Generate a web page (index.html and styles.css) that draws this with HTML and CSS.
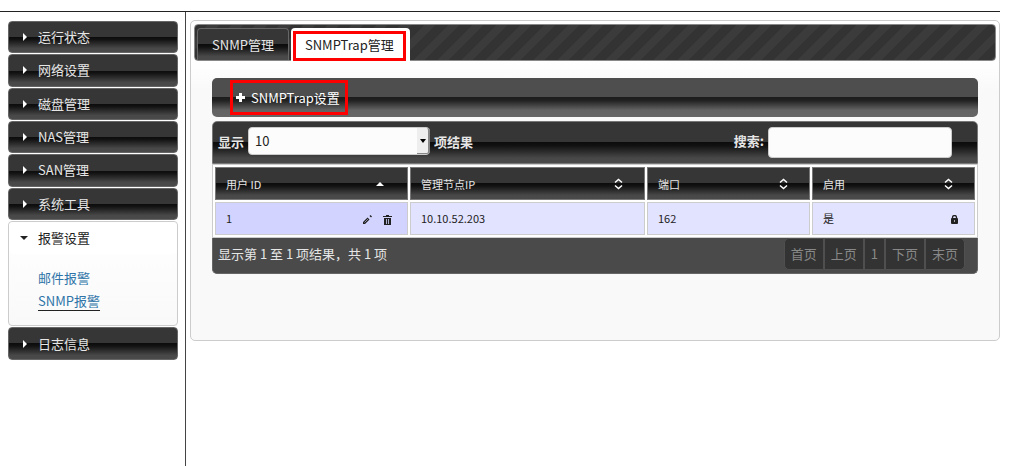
FILE: index.html
```html
<!DOCTYPE html>
<html lang="zh-CN">
<head>
<meta charset="utf-8">
<title>SNMPTrap管理</title>
<link rel="stylesheet" href="styles.css">
</head>
<body>
<div class="page">
  <nav class="sidebar">
    <div class="menu-group">
      <button class="menu-item glossy" type="button"><span class="arrow-right"></span>运行状态</button>
      <button class="menu-item glossy" type="button"><span class="arrow-right"></span>网络设置</button>
      <button class="menu-item glossy" type="button"><span class="arrow-right"></span>磁盘管理</button>
      <button class="menu-item glossy" type="button"><span class="arrow-right"></span>NAS管理</button>
      <button class="menu-item glossy" type="button"><span class="arrow-right"></span>SAN管理</button>
      <button class="menu-item glossy" type="button"><span class="arrow-right"></span>系统工具</button>
    </div>
    <section class="menu-open">
      <button class="menu-item menu-item-open" type="button" aria-expanded="true"><span class="arrow-down"></span>报警设置</button>
      <div class="submenu">
        <a href="#mail">邮件报警</a>
        <a href="#snmp" class="current">SNMP报警</a>
      </div>
    </section>
    <button class="menu-item menu-last glossy" type="button"><span class="arrow-right"></span>日志信息</button>
  </nav>
  <main class="main">
    <div class="tabs" role="tablist">
      <button class="tab glossy" type="button" role="tab" aria-selected="false">SNMP管理</button>
      <button class="tab tab-active" type="button" role="tab" aria-selected="true"><span class="tab-mark">SNMPTrap管理</span></button>
    </div>
    <div class="content">
      <div class="toolbar">
        <button class="add-button" type="button">
          <svg width="9" height="9" viewBox="0 0 9 9" aria-hidden="true"><path d="M3 0h3v3h3v3H6v3H3V6H0V3h3z" fill="#fff"/></svg>
          <span>SNMPTrap设置</span>
        </button>
      </div>
      <section class="data">
        <div class="filter glossy">
          <label class="field-label" for="length">显示</label>
          <span class="select-box">
            <select id="length"><option>10</option><option>25</option></select>
            <span class="select-arrow" aria-hidden="true"></span>
          </span>
          <label class="field-label" for="length">项结果</label>
          <div class="search">
            <label class="field-label" for="search">搜索:</label>
            <input id="search" type="search">
          </div>
        </div>
        <table class="table">
          <colgroup><col class="col-user"><col class="col-ip"><col class="col-port"><col class="col-on"></colgroup>
          <thead>
            <tr>
              <th class="glossy"><div class="cell"><span>用户 ID</span><span class="sort-up"></span></div></th>
              <th class="glossy"><div class="cell"><span>管理节点IP</span><svg class="sort" width="9" height="12" viewBox="0 0 9 12" aria-hidden="true"><path d="M1 4.5L4.5 1.5L8 4.5M1 7.5L4.5 10.5L8 7.5"/></svg></div></th>
              <th class="glossy"><div class="cell"><span>端口</span><svg class="sort" width="9" height="12" viewBox="0 0 9 12" aria-hidden="true"><path d="M1 4.5L4.5 1.5L8 4.5M1 7.5L4.5 10.5L8 7.5"/></svg></div></th>
              <th class="glossy"><div class="cell"><span>启用</span><svg class="sort" width="9" height="12" viewBox="0 0 9 12" aria-hidden="true"><path d="M1 4.5L4.5 1.5L8 4.5M1 7.5L4.5 10.5L8 7.5"/></svg></div></th>
            </tr>
          </thead>
          <tbody>
            <tr>
              <td class="sorted"><div class="cell"><span>1</span>
                <span class="actions">
                  <button class="icon-button" type="button" aria-label="编辑"><svg width="9" height="9" viewBox="0 0 9 9"><path d="M0 9V7L4.5 2.5L6.5 4.5L2 9zM6.5 1L7.5 0L9 1.5L8 2.5z" fill="#222"/><path d="M1.5 7.5L5 4" stroke="#d2d4ff" stroke-width="0.6"/></svg></button>
                  <button class="icon-button" type="button" aria-label="删除"><svg width="9" height="10" viewBox="0 0 9 10"><path d="M3 0h3v1h3v1H0V1h3zM1 3h7v7H1z" fill="#222"/><path d="M3.5 4v5M5.5 4v5" stroke="#d2d4ff" stroke-width="0.8"/></svg></button>
                </span></div></td>
              <td><div class="cell">10.10.52.203</div></td>
              <td><div class="cell">162</div></td>
              <td><div class="cell"><span>是</span><button class="icon-button" type="button" aria-label="锁定"><svg width="7" height="9" viewBox="0 0 7 9"><path d="M1.5 4V2.5a2 2 0 0 1 4 0V4" fill="none" stroke="#222" stroke-width="1.3"/><rect y="3" width="7" height="6" rx="1" fill="#222"/><path d="M3 5h1v2H3z" fill="#aaa"/></svg></button></div></td>
            </tr>
          </tbody>
        </table>
        <div class="footer">
          <span>显示第 1 至 1 项结果，共 1 项</span>
          <div class="pager">
            <button type="button">首页</button><button type="button">上页</button><button type="button">1</button><button type="button">下页</button><button type="button">末页</button>
          </div>
        </div>
      </section>
    </div>
  </main>
</div>
</body>
</html>
```
FILE: styles.css
```css
* { box-sizing: border-box; }
body {
  margin: 0;
  background: #fff;
  color: #222;
  font: 13px/20px "Noto Sans CJK SC", sans-serif;
}
button, input, select { font: inherit; color: inherit; margin: 0; }
button { cursor: pointer; }
.page {
  display: flex;
  margin: 11px 10px 0 0;
  border-top: 1px solid #222;
  min-height: calc(100vh - 11px);
}
.glossy {
  background: linear-gradient(#363636 0%, #363636 50%, #0c0c0c 50%, #121212 58%, #484848 88%, #4a4a4a 100%);
  color: #e6e6e6;
}

.sidebar {
  flex: 0 0 186px;
  padding: 9px 7px 0 8px;
  border-right: 1px solid #444;
}
.menu-group {
  display: grid;
  grid-auto-rows: 1fr;
  gap: 1px;
  min-height: 199px;
}
.menu-item {
  display: flex;
  align-items: center;
  width: 100%;
  min-height: 32px;
  padding: 0 0 0 14px;
  border: 1px solid #666;
  border-radius: 4px;
  text-align: left;
}
.arrow-right {
  width: 15px;
  height: 8px;
}
.arrow-right::before, .arrow-down::before, .select-arrow::before, .sort-up::before {
  content: "";
  display: block;
  border: 4px solid transparent;
  width: 0;
}
.arrow-right::before { border-left-color: #fff; border-right-width: 0; }
.arrow-down {
  width: 18px;
  height: 4px;
}
.arrow-down::before { border-top-color: #222; border-bottom-width: 0; }
.menu-open {
  margin: 1px 0;
  border: 1px solid #ccc;
  border-radius: 4px;
  background: linear-gradient(#fff, #f9f9f9);
}
.menu-item-open {
  padding-left: 10px;
  border-color: #fff;
  background: #fff;
  color: #222;
}
.submenu {
  display: flex;
  flex-direction: column;
  align-items: flex-start;
  gap: 4px;
  padding: 14px 0 13px 29px;
}
.submenu a { color: #2e74a8; text-decoration: none; border-bottom: 1px solid transparent; line-height: 19px; }
.submenu .current { border-color: #222; line-height: 18px; margin-bottom: 1px; }
.menu-last { min-height: 33px; }

.main {
  flex: 1;
  min-width: 0;
  align-self: flex-start;
  margin: 8px 0 0 4px;
  padding: 3px;
  border: 1px solid #ccc;
  border-radius: 5px;
  background: linear-gradient(#fff 40px, #f9f9f9 70px);
}
.tabs {
  display: flex;
  align-items: flex-end;
  gap: 2px;
  height: 37px;
  padding-left: 2px;
  border: 1px solid #888;
  border-radius: 4px;
  background: repeating-linear-gradient(135deg, #333 0 9px, #3b3b3b 9px 17px);
}
.tab {
  height: 32px;
  padding: 0 14px;
  border: 1px solid #666;
  border-bottom: 0;
  border-radius: 4px 4px 0 0;
}
.tab-active {
  height: 33px;
  margin-bottom: -1px;
  padding: 3px 4px 0 2px;
  border: 0;
  background: #fff;
  color: #222;
}
.tab-mark {
  display: block;
  height: 30px;
  padding: 0 9px;
  border: 3px solid #f00;
  line-height: 22px;
}

.content { padding: 17px 18px 63px; }
.toolbar {
  display: flex;
  align-items: center;
  height: 39px;
  padding-left: 18px;
  border-radius: 5px;
  background: linear-gradient(#4e4e4e 0%, #4e4e4e 49%, #1c1c1c 49%, #222 58%, #626262 82%, #666 100%);
}
.add-button {
  display: flex;
  align-items: center;
  gap: 6px;
  height: 35px;
  padding: 0 5px 0 3px;
  border: 3px solid #f00;
  background: none;
  color: #fff;
}
.data { margin-top: 4px; }
.filter {
  display: flex;
  align-items: flex-start;
  gap: 4px;
  height: 43px;
  padding: 5px 25px 0 5px;
  border: 1px solid #777;
  border-radius: 5px 5px 0 0;
}
.field-label { font-weight: bold; padding-top: 5px; }
.select-box { position: relative; width: 182px; }
.select-box select {
  appearance: none;
  display: block;
  width: 100%;
  height: 28px;
  padding: 0 6px;
  border: 1px solid #ccc;
  border-radius: 4px;
  background: #fcfcfc;
  color: #222;
}
.select-arrow {
  position: absolute;
  top: 1px;
  right: 0;
  width: 13px;
  height: 26px;
  padding: 11px 0 0 3px;
  border-right: 2px solid #888;
  border-bottom: 1px solid #888;
  border-radius: 0 3px 3px 0;
  background: #eee;
  pointer-events: none;
}
.select-arrow::before { border-width: 4px 3px 0; border-top-color: #000; }
.search { display: flex; gap: 4px; margin-left: auto; }
.search .field-label { padding-top: 4px; }
.search input {
  appearance: none;
  width: 184px;
  height: 31px;
  padding: 0 6px;
  border: 1px solid #ccc;
  border-radius: 4px;
  background: #fcfcfc;
  color: #222;
}
.table {
  width: 100%;
  table-layout: fixed;
  border: 1px solid #ccc;
  border-collapse: separate;
  border-spacing: 2px;
  background: #fff;
  font-size: 11px;
}
.col-user { width: 193px; }
.col-ip { width: 235px; }
.col-port { width: 163px; }
th, td {
  height: 33px;
  padding: 0 21px 0 10px;
  font-weight: normal;
  text-align: left;
}
th { border: 1px solid #777; }
td { border: 1px solid #ccc; background: #e2e3ff; padding: 0 16px 2px 10px; }
td.sorted { background: #d2d4ff; padding-right: 15px; }
.cell { display: flex; align-items: center; justify-content: space-between; }
.sort { fill: none; stroke: #fff; stroke-width: 1.5; }
.sort-up::before { border-width: 0 4px 4px; border-bottom-color: #fff; }
.sort-up { width: 10px; }
.actions { display: flex; gap: 11px; }
.icon-button {
  display: flex;
  align-items: center;
  padding: 4px 0 0;
  border: 0;
  background: none;
}
.footer {
  display: flex;
  align-items: flex-start;
  justify-content: space-between;
  height: 36px;
  padding: 0 12px 0 5px;
  border: 1px solid #666;
  border-top: 0;
  border-radius: 0 0 5px 5px;
  background: #4a4a4a;
  color: #e6e6e6;
}
.footer > span { padding-top: 6px; }
.pager { display: flex; }
.pager button {
  height: 32px;
  padding: 0 6px;
  border: 1px solid #4f4f4f;
  background: #333;
  color: #888;
}
.pager button:first-child { border-radius: 5px 0 0 5px; }
.pager button:last-child { border-radius: 0 5px 5px 0; }
```
